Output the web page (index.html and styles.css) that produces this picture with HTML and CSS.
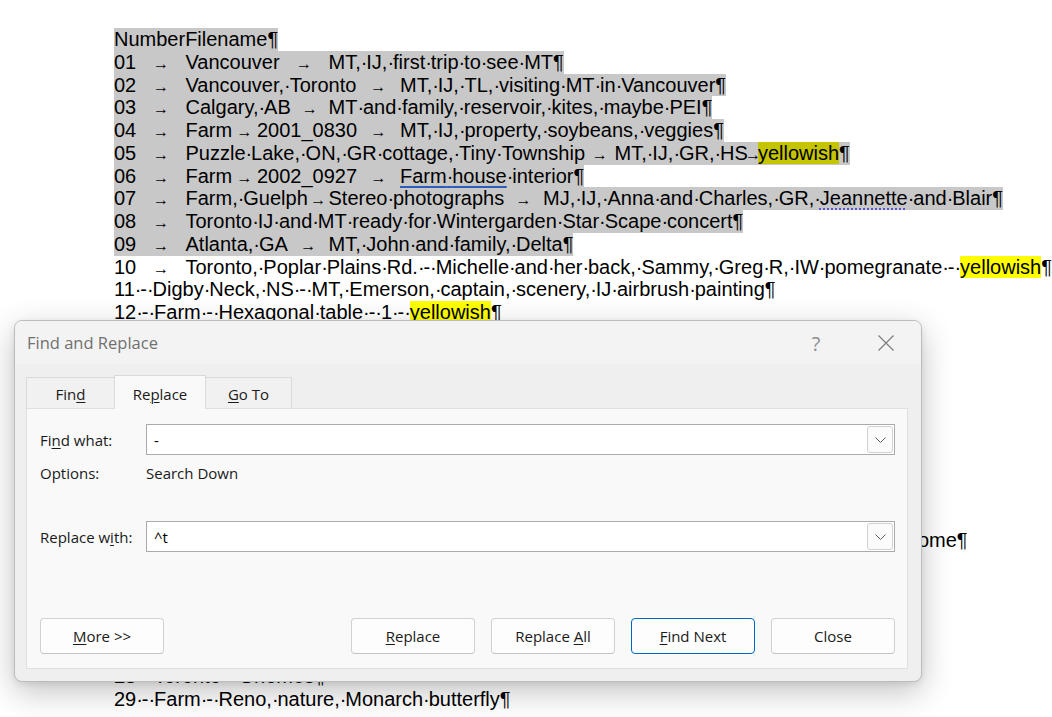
FILE: index.html
```html
<!DOCTYPE html>
<html lang="en">
<head>
<meta charset="utf-8">
<title>Find and Replace</title>
<link rel="stylesheet" href="styles.css">
</head>
<body>
<div class="doc">
<div class="ln sel">NumberFilename¶</div>
<div class="ln sel">01<span class="t">&#9;</span>Vancouver<span class="t">&#9;</span>MT,<span class="d">·</span>IJ,<span class="d">·</span>first<span class="d">·</span>trip<span class="d">·</span>to<span class="d">·</span>see<span class="d">·</span>MT¶</div>
<div class="ln sel">02<span class="t">&#9;</span>Vancouver,<span class="d">·</span>Toronto<span class="t">&#9;</span>MT,<span class="d">·</span>IJ,<span class="d">·</span>TL,<span class="d">·</span>visiting<span class="d">·</span>MT<span class="d">·</span>in<span class="d">·</span>Vancouver¶</div>
<div class="ln sel">03<span class="t">&#9;</span>Calgary,<span class="d">·</span>AB<span class="t">&#9;</span>MT<span class="d">·</span>and<span class="d">·</span>family,<span class="d">·</span>reservoir,<span class="d">·</span>kites,<span class="d">·</span>maybe<span class="d">·</span>PEI¶</div>
<div class="ln sel">04<span class="t">&#9;</span>Farm<span class="t">&#9;</span>2001_0830<span class="t">&#9;</span>MT,<span class="d">·</span>IJ,<span class="d">·</span>property,<span class="d">·</span>soybeans,<span class="d">·</span>veggies¶</div>
<div class="ln sel">05<span class="t">&#9;</span>Puzzle<span class="d">·</span>Lake,<span class="d">·</span>ON,<span class="d">·</span>GR<span class="d">·</span>cottage,<span class="d">·</span>Tiny<span class="d">·</span>Township<span class="t">&#9;</span>MT,<span class="d">·</span>IJ,<span class="d">·</span>GR,<span class="d">·</span>HS<span class="t tn"></span><span class="hl">yellowish</span>¶</div>
<div class="ln sel">06<span class="t">&#9;</span>Farm<span class="t">&#9;</span>2002_0927<span class="t">&#9;</span><span class="gram">Farm<span class="d">·</span>house</span><span class="d">·</span>interior¶</div>
<div class="ln sel">07<span class="t">&#9;</span>Farm,<span class="d">·</span>Guelph<span class="t">&#9;</span>Stereo<span class="d">·</span>photographs<span class="t">&#9;</span>MJ,<span class="d">·</span>IJ,<span class="d">·</span>Anna<span class="d">·</span>and<span class="d">·</span>Charles,<span class="d">·</span>GR,<span class="d">·</span><span class="spell">Jeannette</span><span class="d">·</span>and<span class="d">·</span>Blair¶</div>
<div class="ln sel">08<span class="t">&#9;</span>Toronto<span class="d">·</span>IJ<span class="d">·</span>and<span class="d">·</span>MT<span class="d">·</span>ready<span class="d">·</span>for<span class="d">·</span>Wintergarden<span class="d">·</span>Star<span class="d">·</span>Scape<span class="d">·</span>concert¶</div>
<div class="ln sel">09<span class="t">&#9;</span>Atlanta,<span class="d">·</span>GA<span class="t">&#9;</span>MT,<span class="d">·</span>John<span class="d">·</span>and<span class="d">·</span>family,<span class="d">·</span>Delta¶</div>
<div class="ln">10<span class="t">&#9;</span>Toronto,<span class="d">·</span>Poplar<span class="d">·</span>Plains<span class="d">·</span>Rd.<span class="d">·</span>-<span class="d">·</span>Michelle<span class="d">·</span>and<span class="d">·</span>her<span class="d">·</span>back,<span class="d">·</span>Sammy,<span class="d">·</span>Greg<span class="d">·</span>R,<span class="d">·</span>IW<span class="d">·</span>pomegranate<span class="d">·</span>-<span class="d">·</span><span class="hl">yellowish</span>¶</div>
<div class="ln">11<span class="d">·</span>-<span class="d">·</span>Digby<span class="d">·</span>Neck,<span class="d">·</span>NS<span class="d">·</span>-<span class="d">·</span>MT,<span class="d">·</span>Emerson,<span class="d">·</span>captain,<span class="d">·</span>scenery,<span class="d">·</span>IJ<span class="d">·</span>airbrush<span class="d">·</span>painting¶</div>
<div class="ln">12<span class="d">·</span>-<span class="d">·</span>Farm<span class="d">·</span>-<span class="d">·</span>Hexagonal<span class="d">·</span>table<span class="d">·</span>-<span class="d">·</span>1<span class="d">·</span>-<span class="d">·</span><span class="hl">yellowish</span>¶</div>
<div class="ln">13<span class="d">·</span>-<span class="d">·</span>Farm<span class="d">·</span>-<span class="d">·</span>Barn<span class="d">·</span>and<span class="d">·</span>silo,<span class="d">·</span>winter¶</div>
<div class="ln">14<span class="d">·</span>-<span class="d">·</span>Toronto<span class="d">·</span>-<span class="d">·</span>IJ<span class="d">·</span>and<span class="d">·</span>MT,<span class="d">·</span>High<span class="d">·</span>Park¶</div>
<div class="ln">15<span class="d">·</span>-<span class="d">·</span>Vancouver<span class="d">·</span>-<span class="d">·</span>Stanley<span class="d">·</span>Park,<span class="d">·</span>MT¶</div>
<div class="ln">16<span class="d">·</span>-<span class="d">·</span>Farm<span class="d">·</span>-<span class="d">·</span>Harvest,<span class="d">·</span>corn<span class="d">·</span>field¶</div>
<div class="ln">17<span class="d">·</span>-<span class="d">·</span>Calgary,<span class="d">·</span>AB<span class="d">·</span>-<span class="d">·</span>MT<span class="d">·</span>and<span class="d">·</span>family,<span class="d">·</span>Stampede¶</div>
<div class="ln">18<span class="d">·</span>-<span class="d">·</span>Puzzle<span class="d">·</span>Lake,<span class="d">·</span>ON<span class="d">·</span>-<span class="d">·</span>GR<span class="d">·</span>cottage,<span class="d">·</span>canoe¶</div>
<div class="ln">19<span class="d">·</span>-<span class="d">·</span>Farm<span class="d">·</span>-<span class="d">·</span>Sunset<span class="d">·</span>over<span class="d">·</span>the<span class="d">·</span>pond¶</div>
<div class="ln">20<span class="d">·</span>-<span class="d">·</span>Toronto<span class="d">·</span>-<span class="d">·</span>Wintergarden<span class="d">·</span>theatre¶</div>
<div class="ln">21<span class="d">·</span>-<span class="d">·</span>Atlanta,<span class="d">·</span>GA<span class="d">·</span>-<span class="d">·</span>MT,<span class="d">·</span>John,<span class="d">·</span>aquarium¶</div>
<div class="ln">22<span class="d">·</span>-<span class="d">·</span>Toronto<span class="d">·</span>-<span class="d">·</span>MT,<span class="d">·</span>IJ,<span class="d">·</span>TL,<span class="d">·</span>Sammy<span class="d">·</span>and<span class="d">·</span>Greg<span class="d">·</span>R,<span class="d">·</span>visits<span class="d">·</span>to<span class="d">·</span>the<span class="d">·</span>Poplar<span class="d">·</span>Plains<span class="d">·</span>and<span class="d">·</span>family<span class="d">·</span>at<span class="d">·</span>the<span class="d">·</span>home¶</div>
<div class="ln">23<span class="d">·</span>-<span class="d">·</span>Farm<span class="d">·</span>-<span class="d">·</span>Orchard,<span class="d">·</span>apples¶</div>
<div class="ln">24<span class="d">·</span>-<span class="d">·</span>Guelph<span class="d">·</span>-<span class="d">·</span>Arboretum,<span class="d">·</span>IJ¶</div>
<div class="ln">25<span class="d">·</span>-<span class="d">·</span>Farm<span class="d">·</span>-<span class="d">·</span>Snow<span class="d">·</span>on<span class="d">·</span>the<span class="d">·</span>fence¶</div>
<div class="ln">26<span class="d">·</span>-<span class="d">·</span>Toronto<span class="d">·</span>-<span class="d">·</span>Harbourfront,<span class="d">·</span>MT¶</div>
<div class="ln">27<span class="d">·</span>-<span class="d">·</span>Farm<span class="d">·</span>-<span class="d">·</span>Kitchen<span class="d">·</span>garden,<span class="d">·</span>veggies¶</div>
<div class="ln">28<span class="d">·</span>-<span class="d">·</span>Toronto<span class="d">·</span>-<span class="d">·</span>Gnomes¶</div>
<div class="ln">29<span class="d">·</span>-<span class="d">·</span>Farm<span class="d">·</span>-<span class="d">·</span>Reno,<span class="d">·</span>nature,<span class="d">·</span>Monarch<span class="d">·</span>butterfly¶</div>
</div>

<div class="dlg">
  <div class="titlebar">
    <span class="title">Find and Replace</span>
    <span class="cap help">?</span>
    <span class="cap close"><svg width="16" height="16" viewBox="0 0 16 16"><path d="M0.5 0.5L15.5 15.5M15.5 0.5L0.5 15.5" stroke="#7c7c7c" stroke-width="1.2" fill="none"/></svg></span>
  </div>
  <div class="dbody">
    <div class="tabs">
      <div class="tab tab-find">Fin<u>d</u></div>
      <div class="tab tab-replace active">Re<u>p</u>lace</div>
      <div class="tab tab-goto"><u>G</u>o To</div>
    </div>
    <div class="panel">
      <div class="field">
        <span class="label">Fi<u>n</u>d what:</span>
        <div class="combo"><span class="val">-</span><span class="drop"><svg width="11" height="6" viewBox="0 0 11 6"><path d="M0.5 0.5L5.5 5.5L10.5 0.5" stroke="#5c5c5c" stroke-width="1" fill="none"/></svg></span></div>
      </div>
      <div class="opts">
        <span class="label">Options:</span>
        <span>Search Down</span>
      </div>
      <div class="field field-replace">
        <span class="label">Replace w<u>i</u>th:</span>
        <div class="combo"><span class="val">^t</span><span class="drop"><svg width="11" height="6" viewBox="0 0 11 6"><path d="M0.5 0.5L5.5 5.5L10.5 0.5" stroke="#5c5c5c" stroke-width="1" fill="none"/></svg></span></div>
      </div>
      <div class="buttons">
        <button class="btn"><u>M</u>ore &gt;&gt;</button>
        <span class="spacer"></span>
        <button class="btn"><u>R</u>eplace</button>
        <button class="btn">Replace <u>A</u>ll</button>
        <button class="btn default"><u>F</u>ind Next</button>
        <button class="btn">Close</button>
      </div>
    </div>
  </div>
</div>
</body>
</html>
```
FILE: styles.css
```css
html, body {
  margin: 0;
  padding: 0;
  overflow: hidden;
  background: #ffffff;
}
body {
  position: relative;
  width: 1052px;
  height: 717px;
}

/* ---------- document ---------- */
.doc {
  padding: 28px 0 0 114px;
  font-family: "Liberation Sans", Arial, sans-serif;
  font-size: 20px;
  line-height: 22.75px;
  color: #000;
}
.ln {
  width: max-content;
  height: 22.75px;
  white-space: pre;
  tab-size: 71.5px;
}
/* space marks take the width of a space */
.d {
  letter-spacing: -1.1px;
}
.sel {
  background: #c8c8c8;
}
.t {
  position: relative;
}
.t::after {
  content: "\2192";
  position: absolute;
  left: 0;
  right: 0;
  top: 5px;
  text-align: center;
  font-size: 16px;
  line-height: 16px;
}
.tn {
  display: inline-block;
  width: 10px;
  height: 10px;
}
.tn::after {
  left: -3px;
  right: -3px;
  top: -3px;
}
.hl {
  background: #ffff00;
}
.sel .hl {
  background: #c4c400;
}
.gram {
  text-decoration: underline solid #2e5cb8;
  text-decoration-thickness: 1.5px;
  text-underline-offset: 3px;
}
.spell {
  text-decoration: underline dotted #5b55d6;
  text-decoration-thickness: 2px;
  text-underline-offset: 3px;
}

/* ---------- dialog ---------- */
.dlg {
  position: absolute;
  left: 14px;
  top: 320px;
  width: 908px;
  height: 362px;
  box-sizing: border-box;
  border: 1px solid #bcbcbc;
  border-radius: 8px;
  background: #efefef;
  overflow: hidden;
  box-shadow: 0 10px 32px rgba(0, 0, 0, 0.24), 0 2px 6px rgba(0, 0, 0, 0.08);
  font-family: "Open Sans", "Noto Sans", sans-serif;
  font-size: 15px;
  color: #1a1a1a;
}
.dlg u {
  text-decoration: underline;
  text-decoration-thickness: 1px;
  text-underline-offset: 2px;
}
.titlebar {
  height: 43px;
  display: flex;
  align-items: center;
  background: #f3f3f3;
}
.title {
  padding-left: 12px;
  font-size: 16.5px;
  color: #707070;
  flex: 1;
}
.cap {
  width: 70px;
  height: 43px;
  display: flex;
  align-items: center;
  justify-content: center;
}
.help {
  font-size: 20px;
  color: #8f8f8f;
  padding-top: 1px;
  box-sizing: border-box;
}
.close svg {
  display: block;
}
.dbody {
  padding: 11px 13px 0 11px;
}
.tabs {
  display: flex;
  align-items: flex-end;
  height: 33px;
}
.tab {
  box-sizing: border-box;
  height: 31px;
  padding-top: 6px;
  line-height: 21px;
  text-align: center;
  border: 1px solid #dadada;
  border-bottom: none;
  background: #f1f1f1;
}
.tab-find { width: 88px; border-right: none; }
.tab-replace { width: 92px; }
.tab-goto { width: 86px; border-left: none; }
.tab.active {
  height: 34px;
  margin-bottom: -1px;
  padding-top: 8px;
  background: #f9f9f9;
  position: relative;
  z-index: 1;
}
.panel {
  border: 1px solid #e0e0e0;
  background: #f9f9f9;
  padding: 15px 12px 14px 13px;
}
.field {
  display: grid;
  grid-template-columns: 106px 1fr;
  align-items: center;
  height: 31px;
}
.field-replace {
  margin-top: 38px;
}
.label {
  line-height: 20px;
}
.opts {
  display: grid;
  grid-template-columns: 106px 1fr;
  margin-top: 8px;
  height: 20px;
  line-height: 20px;
}
.combo {
  display: flex;
  align-items: center;
  height: 31px;
  box-sizing: border-box;
  border: 1px solid #ababab;
  padding: 1px;
  background: #ffffff;
}
.val {
  flex: 1;
  padding-left: 6px;
  color: #000;
}
.drop {
  width: 26px;
  height: 27px;
  box-sizing: border-box;
  border: 1px solid #d2d2d2;
  border-radius: 3px;
  background: #fbfbfb;
  display: flex;
  align-items: center;
  justify-content: center;
}
.drop svg {
  display: block;
}
.buttons {
  display: flex;
  gap: 16px;
  margin-top: 66px;
}
.spacer {
  flex: 1;
}
.btn {
  appearance: none;
  width: 124px;
  height: 36px;
  box-sizing: border-box;
  border: 1px solid #d1d1d1;
  border-bottom-color: #c4c4c4;
  border-radius: 4px;
  background: #fdfdfd;
  font-family: inherit;
  font-size: 15px;
  color: #1a1a1a;
  padding: 0;
  line-height: 20px;
}
.btn.default {
  border-color: #0067c0;
}
```
